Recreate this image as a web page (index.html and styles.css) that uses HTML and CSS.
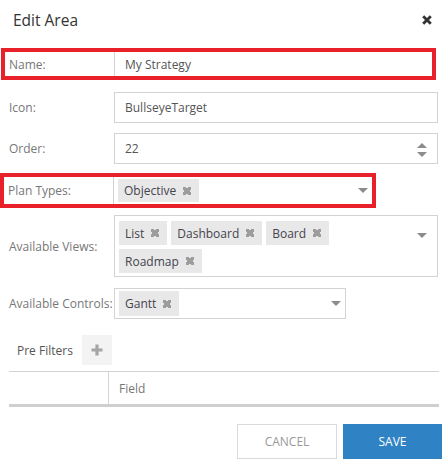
FILE: index.html
```html
<!DOCTYPE html>
<html>
<head>
<meta charset="utf-8">
<link rel="stylesheet" href="styles.css">
</head>
<body>
<div class="dialog">
  <header class="head">
    <h1 class="title">Edit Area</h1>
    <span class="close"><svg width="10" height="10" viewBox="0 0 10 10"><path d="M1.2 1.2L8.8 8.8M8.8 1.2L1.2 8.8" stroke="#333" stroke-width="2.8" stroke-linecap="butt"/></svg></span>
  </header>

  <div class="form">
    <div class="row hl hl-name">
      <label class="lbl">Name:</label>
      <div class="field plain">My Strategy</div>
    </div>
    <div class="row r-icon">
      <label class="lbl">Icon:</label>
      <div class="field box">BullseyeTarget</div>
    </div>
    <div class="row r-order">
      <label class="lbl">Order:</label>
      <div class="field box spin-box">22
        <span class="spin"><span class="up"></span><span class="down"></span></span>
      </div>
    </div>
    <div class="row hl hl-plan">
      <label class="lbl">Plan Types:</label>
      <div class="field multi plan">
        <div class="tags"><span class="tag">Objective<i class="x"></i></span></div>
        <span class="caret"></span>
      </div>
    </div>
    <div class="row r-views">
      <label class="lbl">Available Views:</label>
      <div class="field box multi views">
        <div class="tags">
          <span class="tag">List<i class="x"></i></span>
          <span class="tag">Dashboard<i class="x"></i></span>
          <span class="tag">Board<i class="x"></i></span>
          <span class="tag">Roadmap<i class="x"></i></span>
        </div>
        <span class="caret"></span>
      </div>
    </div>
    <div class="row r-controls">
      <label class="lbl">Available Controls:</label>
      <div class="field box multi controls">
        <div class="tags"><span class="tag">Gantt<i class="x"></i></span></div>
        <span class="caret"></span>
      </div>
    </div>
  </div>

  <div class="prefilters">
    <span class="pf-title">Pre Filters</span>
    <span class="add"><svg width="12" height="12" viewBox="0 0 12 12"><path d="M6 0.5V11.5M0.5 6H11.5" stroke="#a5a5a5" stroke-width="3.2"/></svg></span>
  </div>
  <div class="grid">
    <div class="cell c1"></div>
    <div class="cell c2">Field</div>
  </div>

  <footer class="foot">
    <button class="btn cancel">CANCEL</button>
    <button class="btn save">SAVE</button>
  </footer>
</div>
</body>
</html>
```

FILE: styles.css
```css
html, body {
  margin: 0;
  padding: 0;
  background: #fff;
}
body {
  font-family: "Open Sans", "Noto Sans", sans-serif;
  font-size: 12px;
  color: #555;
}
.dialog {
  width: 448px;
  height: 466px;
  display: flex;
  flex-direction: column;
}
.head {
  height: 48px;
  display: flex;
  align-items: flex-start;
  justify-content: space-between;
  box-sizing: border-box;
  padding: 9px 16px 0 13px;
}
.title {
  margin: 0;
  font-size: 15.5px;
  font-weight: 400;
  color: #333;
  line-height: 22px;
}
.close {
  margin-top: 6px;
  display: flex;
}
.form {
  display: flex;
  flex-direction: column;
}
.row {
  display: flex;
  align-items: stretch;
  box-sizing: border-box;
}
.lbl {
  width: 114px;
  box-sizing: border-box;
  padding-left: 9px;
  display: flex;
  align-items: center;
  color: #777;
  flex: none;
}
.field {
  box-sizing: border-box;
  display: flex;
  align-items: center;
  padding-left: 10px;
  color: #555;
  position: relative;
}
.box {
  width: 324px;
  border: 1px solid #d3d3d3;
}
.hl {
  border: 4px solid #e8202a;
}
.hl .lbl {
  width: 109px;
  padding-left: 4px;
}
.hl-name {
  margin-left: 1px;
  width: 435px;
  height: 32px;
}
.plain {
  flex: 1;
  border-left: 1px solid #d3d3d3;
}
.r-icon {
  margin-top: 12px;
  height: 31px;
}
.r-order {
  margin-top: 10px;
  height: 31px;
}
.spin {
  position: absolute;
  right: 10px;
  top: 9px;
  display: flex;
  flex-direction: column;
  gap: 4px;
}
.up, .down {
  width: 0;
  height: 0;
  border-left: 5px solid transparent;
  border-right: 5px solid transparent;
}
.up { border-bottom: 5px solid #8c8c8c; }
.down { border-top: 5px solid #8c8c8c; }

.hl-plan {
  margin-top: 9px;
  width: 376px;
  height: 35px;
}
.plan {
  flex: 1;
  border-left: 1px solid #d3d3d3;
  padding: 2px 4px;
  align-items: flex-start;
}
.multi {
  padding-left: 4px;
  align-items: flex-start;
}
.tags {
  display: flex;
  flex-wrap: wrap;
  gap: 4px;
}
.tag {
  background: #e8e8e8;
  color: #44444e;
  height: 24px;
  display: inline-flex;
  align-items: center;
  padding: 0 8px 0 6px;
  box-sizing: border-box;
}
.plan .tag { height: 23px; }
.x {
  display: inline-block;
  width: 8px;
  height: 8px;
  margin-left: 7px;
  background:
    linear-gradient(45deg, transparent 34%, #9d9d9d 34%, #9d9d9d 66%, transparent 66%),
    linear-gradient(-45deg, transparent 34%, #9d9d9d 34%, #9d9d9d 66%, transparent 66%);
}
.caret {
  position: absolute;
  width: 0;
  height: 0;
  border-left: 5px solid transparent;
  border-right: 5px solid transparent;
  border-top: 5px solid #8c8c8c;
}
.plan .caret { right: 4px; top: 11px; }
.r-views {
  margin-top: 7px;
}
.views {
  height: 62px;
  padding: 5px 34px 2px 4px;
}
.views .caret { right: 10px; top: 17px; }
.r-controls {
  margin-top: 11px;
}
.controls {
  width: 232px;
  height: 31px;
  padding: 2px 4px;
}
.controls .tag { height: 25px; }
.controls .caret { right: 4px; top: 12px; }

.prefilters {
  margin-top: 16px;
  height: 30px;
  display: flex;
  align-items: center;
  padding-left: 17px;
  gap: 9px;
}
.pf-title {
  color: #555;
}
.add {
  width: 30px;
  height: 30px;
  background: #f3f3f3;
  display: flex;
  align-items: center;
  justify-content: center;
}
.grid {
  margin: 6px 9px 0 9px;
  border-top: 1px solid #d3d3d3;
  border-bottom: 3px solid #cfcfcf;
  height: 36px;
  box-sizing: border-box;
  display: flex;
}
.cell {
  display: flex;
  align-items: center;
  box-sizing: border-box;
}
.c1 {
  width: 100px;
  border-right: 1px solid #d3d3d3;
}
.c2 {
  padding-left: 10px;
  color: #777;
}
.foot {
  margin-top: 17px;
  display: flex;
  justify-content: flex-end;
  gap: 6px;
  padding-right: 6px;
}
.btn {
  font-family: "Open Sans", "Noto Sans", sans-serif;
  font-size: 12px;
  height: 35px;
  box-sizing: border-box;
  border-radius: 0;
  cursor: pointer;
}
.cancel {
  width: 100px;
  background: #fff;
  border: 1px solid #dadada;
  color: #999;
}
.save {
  width: 99px;
  background: #2f83c5;
  border: 1px solid #2f83c5;
  color: #fff;
}
```
